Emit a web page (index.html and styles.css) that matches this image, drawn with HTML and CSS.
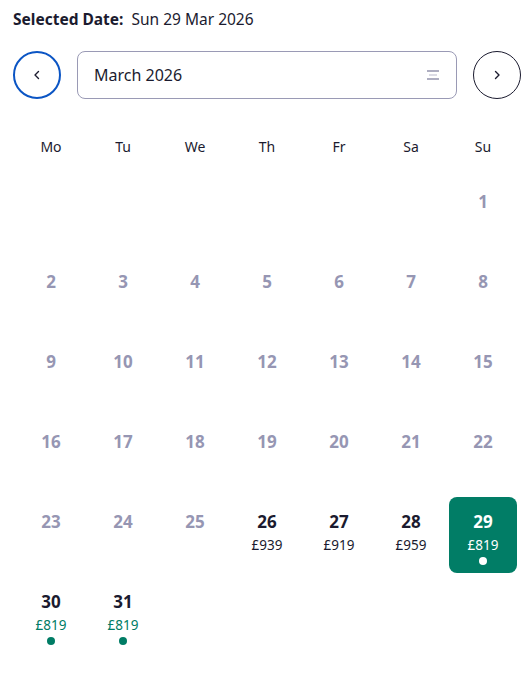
FILE: index.html
```html
<!DOCTYPE html>
<html lang="en">
<head>
<meta charset="utf-8">
<link rel="stylesheet" href="styles.css">
</head>
<body>
<div class="page">
  <div class="selected"><span class="label">Selected Date:</span> <span>Sun 29 Mar 2026</span></div>
  <div class="nav">
    <button class="circle prev" aria-label="Previous month">
      <svg width="12" height="12" viewBox="0 0 12 12"><path d="M7.5 2.5 L4 6 L7.5 9.5" fill="none" stroke="#1b1b2f" stroke-width="1.4" stroke-linecap="round" stroke-linejoin="round"/></svg>
    </button>
    <div class="month">
      <span>March 2026</span>
      <svg class="sort" width="14" height="12" viewBox="0 0 14 12"><path d="M1 2 H13" stroke="#8c8ca6" stroke-width="1.4"/><path d="M3 6 H11" stroke="#c4c4d4" stroke-width="1.2"/><path d="M1 10 H13" stroke="#8c8ca6" stroke-width="1.4"/></svg>
    </div>
    <button class="circle next" aria-label="Next month">
      <svg width="12" height="12" viewBox="0 0 12 12"><path d="M4.5 2.5 L8 6 L4.5 9.5" fill="none" stroke="#1b1b2f" stroke-width="1.4" stroke-linecap="round" stroke-linejoin="round"/></svg>
    </button>
  </div>
  <div class="grid">
    <div class="dow">Mo</div><div class="dow">Tu</div><div class="dow">We</div><div class="dow">Th</div><div class="dow">Fr</div><div class="dow">Sa</div><div class="dow">Su</div>

    <div class="cell empty"></div><div class="cell empty"></div><div class="cell empty"></div><div class="cell empty"></div><div class="cell empty"></div><div class="cell empty"></div>
    <div class="cell"><span class="num off">1</span></div>

    <div class="cell"><span class="num off">2</span></div>
    <div class="cell"><span class="num off">3</span></div>
    <div class="cell"><span class="num off">4</span></div>
    <div class="cell"><span class="num off">5</span></div>
    <div class="cell"><span class="num off">6</span></div>
    <div class="cell"><span class="num off">7</span></div>
    <div class="cell"><span class="num off">8</span></div>

    <div class="cell"><span class="num off">9</span></div>
    <div class="cell"><span class="num off">10</span></div>
    <div class="cell"><span class="num off">11</span></div>
    <div class="cell"><span class="num off">12</span></div>
    <div class="cell"><span class="num off">13</span></div>
    <div class="cell"><span class="num off">14</span></div>
    <div class="cell"><span class="num off">15</span></div>

    <div class="cell"><span class="num off">16</span></div>
    <div class="cell"><span class="num off">17</span></div>
    <div class="cell"><span class="num off">18</span></div>
    <div class="cell"><span class="num off">19</span></div>
    <div class="cell"><span class="num off">20</span></div>
    <div class="cell"><span class="num off">21</span></div>
    <div class="cell"><span class="num off">22</span></div>

    <div class="cell"><span class="num off">23</span></div>
    <div class="cell"><span class="num off">24</span></div>
    <div class="cell"><span class="num off">25</span></div>
    <div class="cell"><span class="num">26</span><span class="price">£939</span></div>
    <div class="cell"><span class="num">27</span><span class="price">£919</span></div>
    <div class="cell"><span class="num">28</span><span class="price">£959</span></div>
    <div class="cell selected-day"><span class="num">29</span><span class="price">£819</span><span class="dot"></span></div>

    <div class="cell"><span class="num">30</span><span class="price cheap">£819</span><span class="dot"></span></div>
    <div class="cell"><span class="num">31</span><span class="price cheap">£819</span><span class="dot"></span></div>
  </div>
</div>
</body>
</html>
```

FILE: styles.css
```css
* { box-sizing: border-box; }
html, body { margin: 0; padding: 0; background: #fff; }
body {
  font-family: "Noto Sans", "Open Sans", sans-serif;
  color: #1b1b2f;
}
.page {
  padding: 8px 10px 0 13px;
  width: 531px;
}
.selected {
  font-size: 15.5px;
  line-height: 22px;
}
.selected .label { font-weight: 700; margin-right: 4px; }
.nav {
  display: flex;
  align-items: center;
  gap: 16px;
  margin-top: 21px;
}
.circle {
  width: 48px;
  height: 48px;
  border-radius: 50%;
  background: #fff;
  display: flex;
  align-items: center;
  justify-content: center;
  padding: 0;
  flex: none;
}
.prev { border: 2px solid #0b55c4; }
.next { border: 1px solid #1b1b2f; }
.month {
  flex: 1;
  height: 48px;
  border: 1px solid #9a9ab5;
  border-radius: 8px;
  display: flex;
  align-items: center;
  justify-content: space-between;
  padding: 0 16px 0 16px;
  font-size: 16px;
}
.grid {
  display: grid;
  grid-template-columns: repeat(7, 68px);
  column-gap: 4px;
  row-gap: 4px;
  margin-left: 4px;
  margin-top: 36px;
}
.dow {
  text-align: center;
  font-size: 14px;
  line-height: 24px;
  margin-bottom: 14px;
}
.cell {
  height: 76px;
  border-radius: 8px;
  display: flex;
  flex-direction: column;
  align-items: center;
  padding-top: 14px;
}
.num {
  font-size: 17px;
  font-weight: 700;
  line-height: 22px;
}
.num.off { color: #9696b3; }
.price {
  font-size: 13.5px;
  line-height: 18px;
  margin-top: 3px;
}
.price.cheap { color: #007c65; }
.dot {
  width: 8px;
  height: 8px;
  border-radius: 50%;
  background: #007c65;
  margin-top: 3px;
}
.selected-day {
  background: #017d66;
  color: #fff;
}
.selected-day .dot { background: #fff; }
```
